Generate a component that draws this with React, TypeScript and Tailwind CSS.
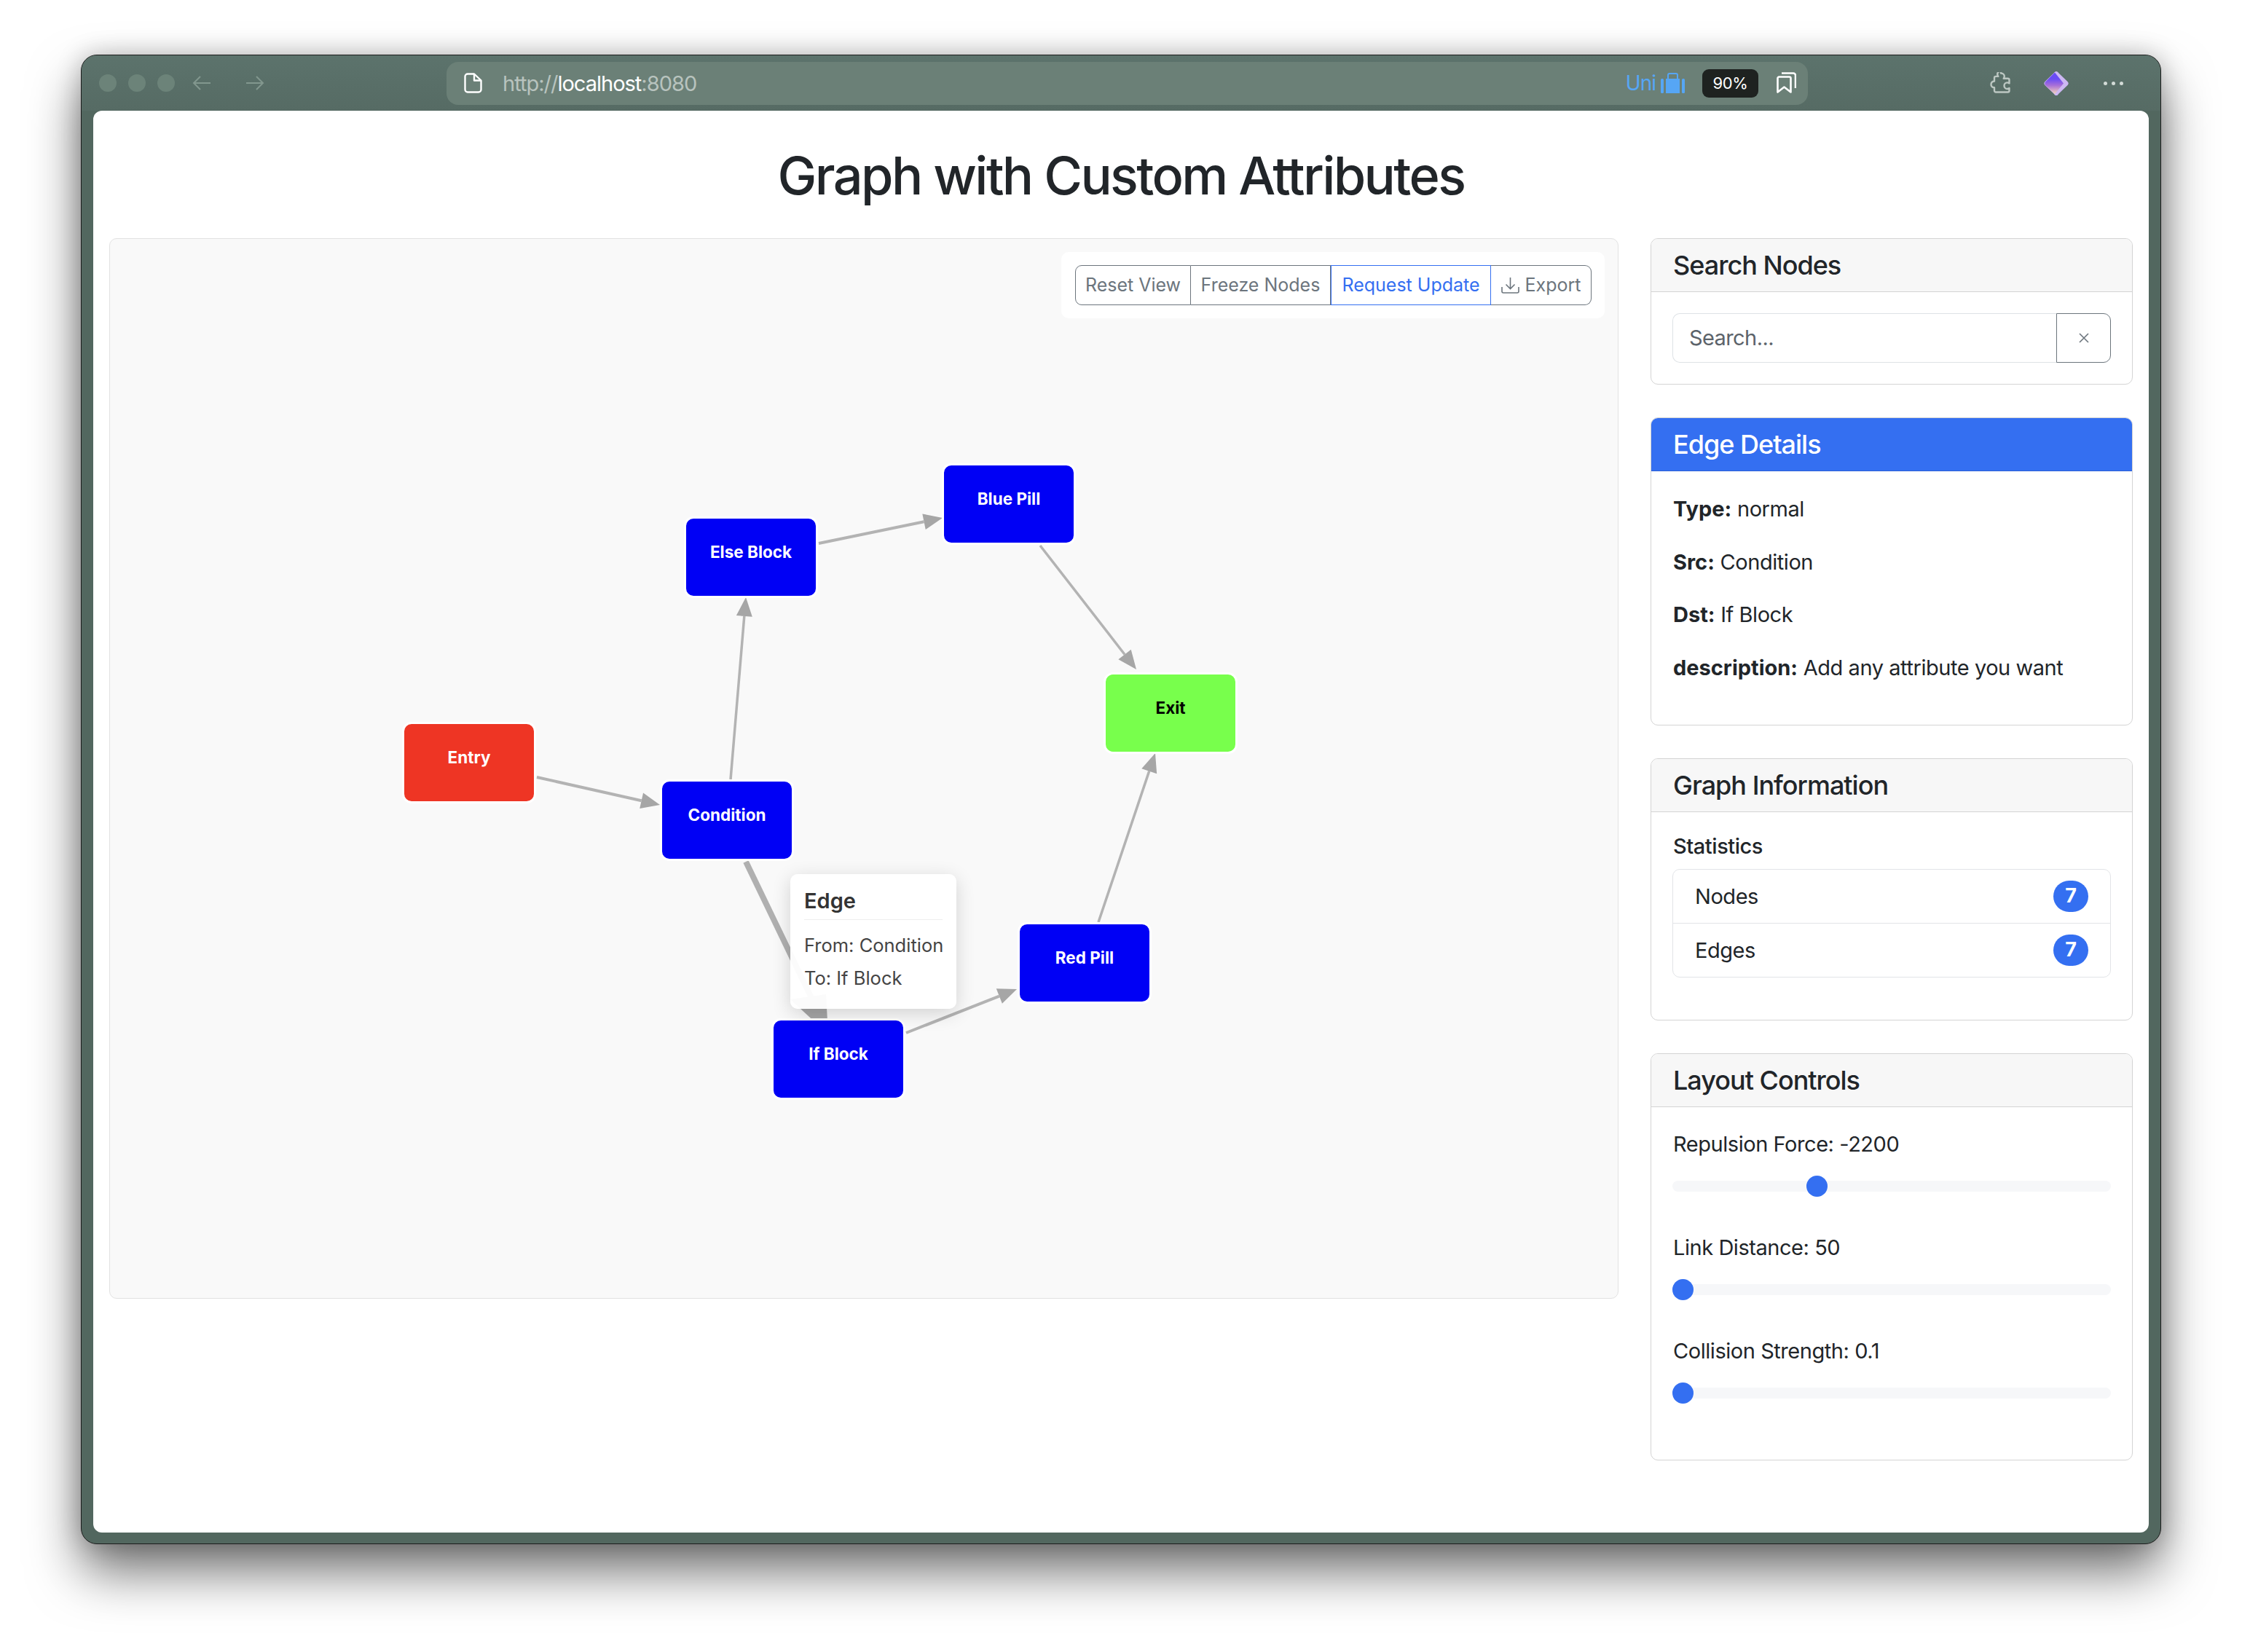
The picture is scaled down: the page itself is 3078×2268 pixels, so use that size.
import React from "react"

const nodes = [
  { label: "Entry", x: 555, y: 994, bg: "bg-[#ee3524]", text: "text-white" },
  { label: "Else Block", x: 942, y: 712, bg: "bg-[#0000f5]", text: "text-white" },
  { label: "Blue Pill", x: 1296, y: 639, bg: "bg-[#0000f5]", text: "text-white" },
  { label: "Exit", x: 1518, y: 926, bg: "bg-[#78ff4c]", text: "text-black" },
  { label: "Condition", x: 909, y: 1073, bg: "bg-[#0000f5]", text: "text-white" },
  { label: "If Block", x: 1062, y: 1401, bg: "bg-[#0000f5]", text: "text-white" },
  { label: "Red Pill", x: 1400, y: 1269, bg: "bg-[#0000f5]", text: "text-white" },
]

const edges = [
  { x1: 737, y1: 1067, x2: 906, y2: 1105, w: 4 },
  { x1: 1003, y1: 1070, x2: 1024, y2: 820, w: 3.5 },
  { x1: 1124, y1: 746, x2: 1294, y2: 711, w: 4 },
  { x1: 1428, y1: 749, x2: 1560, y2: 919, w: 3.5 },
  { x1: 1508, y1: 1266, x2: 1586, y2: 1034, w: 3.5 },
  { x1: 1244, y1: 1418, x2: 1396, y2: 1358, w: 4 },
]

function Edge({ x1, y1, x2, y2, w }: { x1: number; y1: number; x2: number; y2: number; w: number }) {
  const len = Math.hypot(x2 - x1, y2 - y1)
  const ux = (x2 - x1) / len
  const uy = (y2 - y1) / len
  const bx = x2 - ux * 26
  const by = y2 - uy * 26
  const pts = `${x2},${y2} ${bx - uy * 11},${by + ux * 11} ${bx + uy * 11},${by - ux * 11}`
  return (
    <g>
      <line x1={x1} y1={y1} x2={bx} y2={by} stroke="#b3b3b3" strokeWidth={w} />
      <polygon points={pts} fill="#a6a6a6" />
    </g>
  )
}

function Card({ title, children, primary }: { title: string; children: React.ReactNode; primary?: boolean }) {
  return (
    <div className="border border-[#d4d4d4] rounded-[10px] bg-white overflow-hidden">
      <div className={`h-[73px] px-[30px] flex items-center text-[36px] font-medium tracking-[-1px] border-b ${primary ? "bg-[#346ff1] text-white border-[#2e62d6]" : "bg-[#f7f7f7] text-[#212529] border-[#d4d4d4]"}`}>
        {title}
      </div>
      {children}
    </div>
  )
}

function Slider({ label, thumbOffset }: { label: string; thumbOffset: string }) {
  return (
    <div className="mb-[48px]">
      <div className="pl-[1px] text-[29px] leading-[43px] mb-[22px]">{label}</div>
      <div className="relative h-[29px] flex items-center">
        <div className="w-full h-[15px] rounded-full bg-[#f6f7f9]"></div>
        <div className={`absolute top-0 w-[29px] h-[29px] rounded-full bg-[#346ff1] ${thumbOffset}`}></div>
      </div>
    </div>
  )
}

export default function App() {
  return (
    <div className="w-[3078px] h-[2268px] bg-white pt-[75px] px-[111px] font-['Inter','Noto_Sans',sans-serif] text-[#212529] tracking-[-0.45px] overflow-hidden">
      <div className="w-[2856px] h-[2045px] flex flex-col rounded-[22px] border border-[#1c1c1c] bg-[#52675f] px-[16px] pb-[15px] shadow-[0_38px_70px_rgba(0,0,0,0.55),0_0_34px_rgba(0,0,0,0.22)]">
        {/* title bar */}
        <div className="h-[76px] -mx-[16px] px-[24px] rounded-t-[21px] bg-gradient-to-b from-[#5c736c] to-[#566b64] flex items-center">
          <div className="flex gap-[16px]">
            <span className="w-[24px] h-[24px] rounded-full bg-[#6c8379]"></span>
            <span className="w-[24px] h-[24px] rounded-full bg-[#6c8379]"></span>
            <span className="w-[24px] h-[24px] rounded-full bg-[#6c8379]"></span>
          </div>
          <svg className="ml-[24px]" width="26" height="24" viewBox="0 0 26 24" fill="none" stroke="#82978e" strokeWidth="2">
            <path d="M25 12H2M11 3l-9 9 9 9" />
          </svg>
          <svg className="ml-[47px]" width="26" height="24" viewBox="0 0 26 24" fill="none" stroke="#82978e" strokeWidth="2">
            <path d="M1 12h23M15 3l9 9-9 9" />
          </svg>
          <div className="ml-[250px] w-[1869px] h-[59px] rounded-[16px] bg-[#6b8077] flex items-center pl-[24px] pr-[16px]">
            <svg width="25" height="28" viewBox="0 0 25 28" fill="none" stroke="white" strokeWidth="2.4" strokeLinejoin="round">
              <path d="M5 1.500h9l9.500 9V23a3.500 3.500 0 0 1-3.500 3.500H5A3.500 3.500 0 0 1 1.500 23V5A3.500 3.500 0 0 1 5 1.500z" />
              <path d="M14 1.500V10.500h9.500" />
            </svg>
            <div className="ml-[28px] text-[29px] text-[#b8c3be] leading-none tracking-[-1px]">
              http://<span className="text-white">localhost</span>:8080
            </div>
            <div className="ml-auto flex items-center text-[#56a6f5] text-[28px] leading-none tracking-[-1px]">
              Uni
              <svg className="ml-[7px]" width="33" height="28" viewBox="0 0 33 28" fill="#56a6f5">
                <rect x="0" y="8" width="4" height="20" rx="1.5" />
                <rect x="7" y="8" width="19" height="20" />
                <rect x="29" y="8" width="4" height="20" rx="1.5" />
                <path d="M10 9V3a2 2 0 0 1 2-2h9a2 2 0 0 1 2 2v6" fill="none" stroke="#56a6f5" strokeWidth="2" />
              </svg>
            </div>
            <div className="ml-[24px] w-[77px] h-[39px] rounded-[9px] bg-[#1e2220] text-white text-[22px] flex items-center justify-center">90%</div>
            <svg className="ml-[25px]" width="27" height="30" viewBox="0 0 27 30" fill="none" stroke="white" strokeWidth="2.6" strokeLinejoin="round">
              <path d="M1.500 27.500V8.500a2 2 0 0 1 2-2h14a2 2 0 0 1 2 2v19l-9-7z" />
              <path d="M7 1.500h16a3 3 0 0 1 3 3V22" />
            </svg>
          </div>
          <svg className="ml-[250px]" width="30" height="30" viewBox="0 0 30 30" fill="none" stroke="#bcc7c2" strokeWidth="2.4" strokeLinejoin="round">
            <path d="M15 1.500c2.800 0 4.800 2 4.800 4.300 0 1.200-.5 2.100-1.100 3h5.800c1.100 0 2 .9 2 2v4.600c-.9-.6-1.800-1-2.800-1-2.300 0-4.200 1.900-4.200 4.300s1.900 4.300 4.200 4.300c1 0 1.900-.4 2.800-1v3.500c0 1.100-.9 2-2 2H8c-1.100 0-2-.9-2-2v-4.200c-2.600-.3-4.500-2.100-4.500-4.400s1.900-4.100 4.500-4.400v-4.600c0-1.100.9-2 2-2h3.300c-.6-.9-1.100-1.800-1.100-3 0-2.300 2-4.300 4.800-4.300z" />
          </svg>
          <svg className="ml-[44px]" width="34" height="33" viewBox="0 0 34 33">
            <defs>
              <linearGradient id="gem" x1="0" y1="0" x2="0" y2="1">
                <stop offset="0.3" stopColor="#6a4cf5" />
                <stop offset="0.6" stopColor="#a86fd8" />
                <stop offset="1" stopColor="#f5d5b8" />
              </linearGradient>
            </defs>
            <path d="M17 0c1.500 0 2.500 1 3.500 2.600L32.500 14c1.600 1.700 1.600 3.300 0 5L20.500 30.400c-1 1.700-2 2.600-3.500 2.600s-2.500-.9-3.500-2.600L1.500 19c-1.600-1.700-1.600-3.300 0-5L13.500 2.600C14.500 1 15.500 0 17 0z" fill="#cdb8f3" />
            <path d="M15 1.500L27 16.500 15 31 2 19c-1-1.200-1-3 0-4.500z" fill="url(#gem)" />
          </svg>
          <div className="ml-[48px] flex gap-[6px]">
            <span className="w-[5px] h-[5px] rounded-full bg-[#d3dbd7]"></span>
            <span className="w-[5px] h-[5px] rounded-full bg-[#d3dbd7]"></span>
            <span className="w-[5px] h-[5px] rounded-full bg-[#d3dbd7]"></span>
          </div>
        </div>

        {/* page */}
        <div className="flex-1 bg-white rounded-[12px]">
          <div className="h-[175px] pt-[46px] text-center">
            <h1 className="text-[72px] leading-[86px] font-medium tracking-[-2.6px]">Graph with Custom Attributes</h1>
          </div>
          <div className="flex pl-[22px] pr-[22px] gap-[44px] items-start">
            <div className="relative w-[2072px] h-[1456px] rounded-[10px] border border-[#e2e2e2] bg-[#f9f9f9] overflow-hidden tracking-normal">
              <svg className="absolute left-0 top-0" width="2070" height="1454" viewBox="151 328 2070 1454">
                {edges.map((e, i) => (
                  <Edge key={i} {...e} />
                ))}
                <line x1="1024" y1="1183" x2="1115" y2="1372" stroke="#b0b0b0" strokeWidth="8" />
                <polygon points="1137,1420 1134,1365 1085,1372" fill="#a6a6a6" />
              </svg>
              {nodes.map((n) => (
                <div
                  key={n.label}
                  className={`absolute w-[184px] h-[112px] border-[3px] border-white rounded-[13px] pt-[30px] text-center text-[22.5px] leading-[32px] font-bold ${n.bg} ${n.text}`}
                  style={{ left: n.x - 154, top: n.y - 331 }}
                >
                  {n.label}
                </div>
              ))}
              <div className="absolute left-[934px] top-[872px] w-[228px] h-[185px] rounded-[10px] bg-white/95 shadow-[0_6px_26px_rgba(0,0,0,0.16)] px-[19px] pt-[18px] text-[#444]">
                <div className="text-[29px] leading-[38px] font-semibold text-[#333] pb-[6px] border-b border-[#eeeeee] w-[190px]">Edge</div>
                <div className="mt-[12px] text-[25.5px] leading-[45px] whitespace-nowrap">From: Condition</div>
                <div className="text-[25.5px] leading-[45px]">To: If Block</div>
              </div>
              <div className="absolute left-[1306px] top-[18px] w-[746px] h-[91px] rounded-[10px] bg-white flex items-center pl-[19px] text-[25px] text-[#6c757d]">
                <div className="w-[159px] h-[55px] flex items-center justify-center border border-[#6c757d] rounded-l-[9px]">Reset View</div>
                <div className="w-[192px] h-[55px] flex items-center justify-center border border-l-0 border-[#6c757d]">Freeze Nodes</div>
                <div className="w-[220px] h-[55px] flex items-center justify-center border border-[#346ff1] text-[#346ff1]">Request Update</div>
                <div className="w-[138px] h-[55px] flex items-center justify-center gap-[8px] border border-l-0 border-[#6c757d] rounded-r-[9px]">
                  <svg width="25" height="23" viewBox="0 0 25 23" fill="none" stroke="#6c757d" strokeWidth="1.6">
                    <path d="M1 14v6a2 2 0 0 0 2 2h19a2 2 0 0 0 2-2v-6" />
                    <path d="M12.500 1v15M6.500 10.500l6 6 6-6" />
                  </svg>
                  Export
                </div>
              </div>
            </div>

            <div className="w-[662px] flex flex-col gap-[45px]">
              <Card title="Search Nodes">
                <div className="p-[29px] flex">
                  <div className="flex-1 h-[68px] rounded-l-[10px] border border-r-0 border-[#dee2e6] pl-[22px] flex items-center text-[29px] tracking-[-0.6px] text-[#5c636a]">Search...</div>
                  <div className="w-[75px] h-[68px] rounded-r-[10px] border border-[#6c757d] flex items-center justify-center">
                    <svg width="14" height="14" viewBox="0 0 14 14" stroke="#6c757d" strokeWidth="1.6">
                      <path d="M1 1l12 12M13 1L1 13" />
                    </svg>
                  </div>
                </div>
              </Card>
              <Card title="Edge Details" primary>
                <div className="px-[30px] pt-[30px] pb-[28px] text-[29px] leading-[43.5px]">
                  <p className="mb-[29px]"><b className="font-bold tracking-normal">Type:</b> normal</p>
                  <p className="mb-[29px]"><b className="font-bold tracking-normal">Src:</b> Condition</p>
                  <p className="mb-[29px]"><b className="font-bold tracking-normal">Dst:</b> If Block</p>
                  <p className="mb-[29px]"><b className="font-bold tracking-normal">description:</b> Add any attribute you want</p>
                </div>
              </Card>
              <Card title="Graph Information">
                <div className="px-[29px] pt-[29px] pb-[58px]">
                  <div className="pl-[1px] text-[29px] leading-[35px] font-medium mb-[14px]">Statistics</div>
                  <div className="border border-[#e2e4e7] rounded-[10px] text-[29px]">
                    <div className="h-[74px] px-[30px] flex items-center justify-between border-b border-[#e2e4e7]">
                      Nodes
                      <span className="w-[48px] h-[43px] rounded-full bg-[#346ff1] text-white text-[27px] font-bold flex items-center justify-center">7</span>
                    </div>
                    <div className="h-[73px] px-[30px] flex items-center justify-between">
                      Edges
                      <span className="w-[48px] h-[43px] rounded-full bg-[#346ff1] text-white text-[27px] font-bold flex items-center justify-center">7</span>
                    </div>
                  </div>
                </div>
              </Card>
              <Card title="Layout Controls">
                <div className="px-[29px] pt-[29px] pb-[29px]">
                  <Slider label="Repulsion Force: -2200" thumbOffset="left-[184px]" />
                  <Slider label="Link Distance: 50" thumbOffset="left-0" />
                  <Slider label="Collision Strength: 0.1" thumbOffset="left-0" />
                </div>
              </Card>
            </div>
          </div>
        </div>
      </div>
    </div>
  )
}
